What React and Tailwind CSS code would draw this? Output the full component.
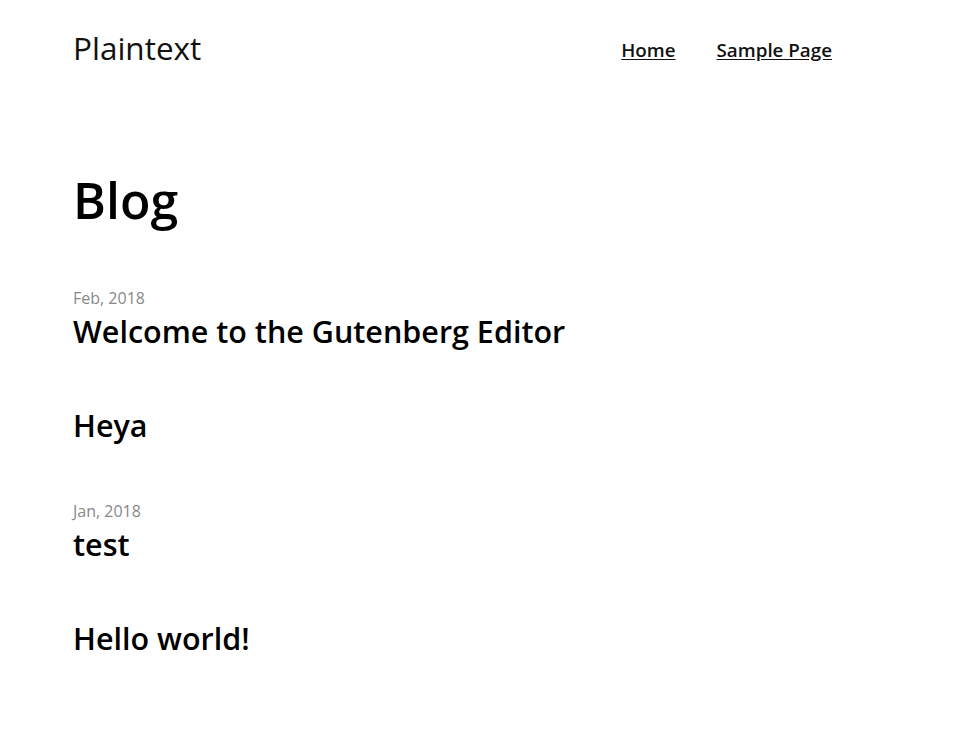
import React from "react";

const posts = [
  { date: "Feb, 2018", title: "Welcome to the Gutenberg Editor" },
  { date: null, title: "Heya" },
  { date: "Jan, 2018", title: "test" },
  { date: null, title: "Hello world!" },
];

const App = () => {
  return (
    <div
      className="min-h-screen bg-white text-[#111] pl-[73px]"
      style={{ fontFamily: '"Open Sans", "Noto Sans", sans-serif' }}
    >
      <header className="flex items-center justify-between w-[759px] pt-[28px]">
        <a href="#" className="text-[31.5px] leading-[40px] text-[#111]">
          Plaintext
        </a>
        <nav className="flex gap-[41px] text-[18.8px] font-semibold mt-[4px]">
          <a href="#" className="underline underline-offset-2">
            Home
          </a>
          <a href="#" className="underline underline-offset-2">
            Sample Page
          </a>
        </nav>
      </header>

      <h1 className="mt-[100px] text-[50px] leading-[64px] font-semibold text-black">
        Blog
      </h1>

      <div className="mt-[54px] flex flex-col gap-[54px]">
        {posts.map((post, index) => (
          <article key={index}>
            {post.date && (
              <p className="text-[16px] leading-[24px] text-[#888] mb-[1px]">
                {post.date}
              </p>
            )}
            <h2 className="text-[30.5px] leading-[40px] font-semibold text-black">
              {post.title}
            </h2>
          </article>
        ))}
      </div>
    </div>
  );
};

export default App;
